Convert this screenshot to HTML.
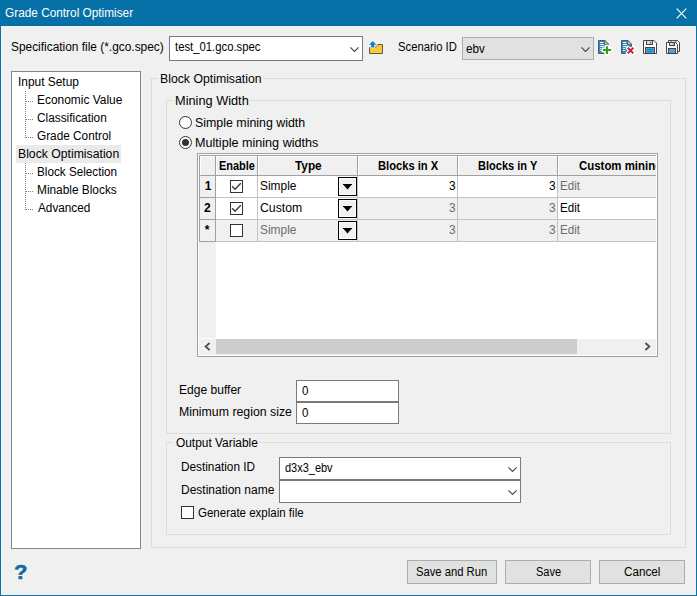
<!DOCTYPE html>
<html><head><meta charset="utf-8"><title>Grade Control Optimiser</title>
<style>
*{box-sizing:border-box;margin:0;padding:0}
html,body{width:697px;height:596px;overflow:hidden;background:#f0f0f0}
body{font-family:"Liberation Sans",sans-serif;font-size:12px;color:#000;position:relative}
.abs{position:absolute}
.t{position:absolute;white-space:nowrap;line-height:14px;height:14px;transform-origin:0 0}
#win{position:absolute;left:0;top:0;width:697px;height:596px;border:1px solid #0b71a6;border-top:none;background:#f0f0f0}
#title{position:absolute;left:0;top:0;width:697px;height:26px;background:#0571a6}
.white{background:#fff;border:1px solid #7a7a7a}
.grp{position:absolute;border:1px solid #dcdcdc}
.mask{position:absolute;background:#f0f0f0;height:3px}
.btn{position:absolute;height:24px;border:1px solid #adadad;background:#e1e1e1}
.ln{position:absolute;background:#a0a0a0}
.bg{position:absolute}
.cb{position:absolute;width:13px;height:13px;border:1px solid #333;background:#fff}
.dd{position:absolute;width:19px;height:19px;border:1px solid #000;background:#f0f0f0;box-shadow:inset 0 0 0 1px #fff}
.dd svg{position:absolute;left:4px;top:6px}
.vd{position:absolute;width:1px;background:repeating-linear-gradient(to bottom,#808080 0,#808080 1px,transparent 1px,transparent 2px)}
.hd{position:absolute;height:1px;background:repeating-linear-gradient(to right,#808080 0,#808080 1px,transparent 1px,transparent 2px)}
</style></head><body>
<div id="win"></div>
<div id="title"></div>
<svg class="abs" style="left:674.7px;top:6.7px" width="13" height="13" viewBox="0 0 13 13"><path d="M1.7 1.7L11.3 11.3M11.3 1.7L1.7 11.3" stroke="#fff" stroke-width="1.2" fill="none"/></svg>
<div class="abs white" style="left:169px;top:36px;width:194px;height:25px"></div>
<svg class="abs" style="left:348.5px;top:45.6px" width="11" height="7" viewBox="0 0 11 7"><path d="M1.4 1.4L5.5 5.5L9.6 1.4" stroke="#444" stroke-width="1.1" fill="none"/></svg>
<div class="abs" style="left:462px;top:37px;width:132px;height:23px;background:#e1e1e1;border:1px solid #adadad"></div>
<svg class="abs" style="left:579.8px;top:45.8px" width="11" height="7" viewBox="0 0 11 7"><path d="M1.4 1.4L5.5 5.5L9.6 1.4" stroke="#444" stroke-width="1.1" fill="none"/></svg>
<!-- icons -->
<svg class="abs" style="left:366px;top:38px" width="20" height="20" viewBox="366 38 20 20">
 <path d="M369.5 47.5H375.3L377.3 44.5H382.5V53.5H369.5Z" fill="#fcc934" stroke="#5a5a5a" stroke-width="1"/>
 <path d="M372.75 40.9L376.6 44.8H374.4V47.4H371.1V44.8H368.9Z" fill="#fff" stroke="#fff" stroke-width="1.6" stroke-linejoin="round"/>
 <path d="M372.75 40.9L376.6 44.8H374.4V47.4H371.1V44.8H368.9Z" fill="#1b7fb6"/>
</svg>
<svg class="abs" style="left:596px;top:38px" width="18" height="18" viewBox="596 38 18 18">
 <path d="M598.5 40.5H604.8L608.5 44.2V53.5H598.5Z" fill="#2e8dc1" stroke="#555" stroke-width="1"/>
 <path d="M604.8 40.5V44.2H608.5Z" fill="#fff" stroke="#555" stroke-width="0.9"/>
 <path d="M600.2 42.5H603.2M600.2 44.5H603.8M600.2 46.5H603.8M600.2 48.5H601.2M600.2 50.5H601.2" stroke="#fff" stroke-width="1"/>
 <path d="M605.9 46.2H608.1V48.9H611.1V51.1H608.1V54H605.9V51.1H602.9V48.9H605.9Z" fill="#fff" stroke="#fff" stroke-width="3" stroke-linejoin="round"/>
 <path d="M605.9 46.2H608.1V48.9H611.1V51.1H608.1V54H605.9V51.1H602.9V48.9H605.9Z" fill="#3a9a1e"/>
</svg>
<svg class="abs" style="left:619px;top:38px" width="18" height="18" viewBox="619 38 18 18">
 <path d="M621.5 40.5H627.8L631.5 44.2V53.5H621.5Z" fill="#2e8dc1" stroke="#555" stroke-width="1"/>
 <path d="M627.8 40.5V44.2H631.5Z" fill="#fff" stroke="#555" stroke-width="0.9"/>
 <path d="M623.2 42.5H626.2M623.2 44.5H626.8M623.2 46.5H626.2M623.2 48.5H625.2M623.2 50.5H625.2" stroke="#fff" stroke-width="1"/>
 <path d="M627.9 48L633.2 53.2M633.2 48L627.9 53.2" stroke="#fff" stroke-width="4.2" stroke-linecap="round" fill="none"/>
 <path d="M627.7 47.8L633.4 53.4M633.4 47.8L627.7 53.4" stroke="#c0212b" stroke-width="1.9" fill="none"/>
</svg>
<svg class="abs" style="left:641px;top:38px" width="18" height="18" viewBox="641 38 18 18">
 <path d="M643.5 40.5H654L656.5 43V53.5H643.5Z" fill="#fff" stroke="#444" stroke-width="1"/>
 <rect x="646.5" y="40.5" width="6" height="4" fill="#ddd" stroke="#444" stroke-width="1"/>
 <rect x="649.8" y="41.8" width="1.4" height="1.6" fill="#1b7fb6"/>
 <rect x="645.5" y="47.5" width="9" height="6" fill="#49a3d6" stroke="#444" stroke-width="1"/>
 <path d="M647 49.5H653M647 51.5H653" stroke="#1b7fb6" stroke-width="1"/>
</svg>
<svg class="abs" style="left:664px;top:38px" width="18" height="18" viewBox="664 38 18 18">
 <path d="M668.5 40.5H677.5L679.5 42.5V51.5H668.5Z" fill="#fff" stroke="#444" stroke-width="1"/>
 <rect x="671" y="40.5" width="5" height="3" fill="#cfe3f0" stroke="#444" stroke-width="0.8"/>
 <path d="M666.5 42.5H675.5L677.5 44.5V53.5H666.5Z" fill="#fff" stroke="#444" stroke-width="1"/>
 <rect x="669.5" y="42.5" width="5" height="3" fill="#ddd" stroke="#444" stroke-width="1"/>
 <rect x="672" y="43" width="2" height="2" fill="#9cc8e4"/>
 <rect x="668.5" y="48.5" width="7" height="5" fill="#49a3d6" stroke="#444" stroke-width="1"/>
</svg>


<div class="abs white" style="left:11px;top:71px;width:130px;height:478px;border-color:#828790"></div>
<div class="abs" style="left:16px;top:145px;width:105px;height:18px;background:#eaeaea"></div>
<div class="vd" style="left:25px;top:91px;height:47px"></div>
<div class="hd" style="left:26px;top:101px;width:8px"></div>
<div class="hd" style="left:26px;top:119px;width:8px"></div>
<div class="hd" style="left:26px;top:137px;width:8px"></div>
<div class="vd" style="left:25px;top:163px;height:47px"></div>
<div class="hd" style="left:26px;top:173px;width:8px"></div>
<div class="hd" style="left:26px;top:191px;width:8px"></div>
<div class="hd" style="left:26px;top:209px;width:8px"></div>
<div class="grp" style="left:151px;top:78px;width:535px;height:470px"></div><div class="mask" style="left:158px;top:77px;width:105px"></div>
<div class="grp" style="left:166px;top:100px;width:505px;height:334px"></div><div class="mask" style="left:173px;top:99px;width:77px"></div>
<div class="grp" style="left:166px;top:442px;width:505px;height:93px"></div><div class="mask" style="left:173px;top:441px;width:86px"></div>
<div class="abs" style="left:179px;top:116px;width:13px;height:13px;border:1px solid #333;border-radius:50%;background:#fff"></div>
<div class="abs" style="left:179px;top:136px;width:13px;height:13px;border:1px solid #333;border-radius:50%;background:#fff"></div>
<div class="abs" style="left:182px;top:139px;width:7px;height:7px;border-radius:50%;background:#333"></div>
<div class="abs" style="left:197px;top:153px;width:461px;height:204px;background:#fff;border:1px solid #a0a0a0"></div>
<div class="abs" id="gridclip" style="left:199px;top:155px;width:457px;height:200px;overflow:hidden"><div class="abs" style="left:-199px;top:-155px;width:697px;height:596px">
<div class="bg" style="left:199px;top:155px;width:17px;height:183px;background:#f0f0f0"></div>
<div class="bg" style="left:199px;top:155px;width:468px;height:21px;background:#f0f0f0"></div>
<div class="bg" style="left:558px;top:176px;width:110px;height:21px;background:#f0f0f0"></div>
<div class="bg" style="left:358px;top:198px;width:199px;height:21px;background:#f0f0f0"></div>
<div class="bg" style="left:216px;top:220px;width:452px;height:21px;background:#f0f0f0"></div>
<div class="bg" style="left:200px;top:156px;width:15px;height:1px;background:#fff"></div>
<div class="bg" style="left:200px;top:156px;width:1px;height:19px;background:#fff"></div>
<div class="bg" style="left:216px;top:156px;width:41px;height:1px;background:#fff"></div>
<div class="bg" style="left:216px;top:156px;width:1px;height:19px;background:#fff"></div>
<div class="bg" style="left:258px;top:156px;width:99px;height:1px;background:#fff"></div>
<div class="bg" style="left:258px;top:156px;width:1px;height:19px;background:#fff"></div>
<div class="bg" style="left:358px;top:156px;width:99px;height:1px;background:#fff"></div>
<div class="bg" style="left:358px;top:156px;width:1px;height:19px;background:#fff"></div>
<div class="bg" style="left:458px;top:156px;width:99px;height:1px;background:#fff"></div>
<div class="bg" style="left:458px;top:156px;width:1px;height:19px;background:#fff"></div>
<div class="bg" style="left:558px;top:156px;width:109px;height:1px;background:#fff"></div>
<div class="bg" style="left:558px;top:156px;width:1px;height:19px;background:#fff"></div>
<div class="ln" style="left:216px;top:197px;width:453px;height:1px;background:#c3c3c3"></div>
<div class="ln" style="left:216px;top:219px;width:453px;height:1px;background:#c3c3c3"></div>
<div class="ln" style="left:216px;top:241px;width:453px;height:1px;background:#c3c3c3"></div>
<div class="ln" style="left:257px;top:176px;width:1px;height:66px;background:#c3c3c3"></div>
<div class="ln" style="left:357px;top:176px;width:1px;height:66px;background:#c3c3c3"></div>
<div class="ln" style="left:457px;top:176px;width:1px;height:66px;background:#c3c3c3"></div>
<div class="ln" style="left:557px;top:176px;width:1px;height:66px;background:#c3c3c3"></div>
<div class="ln" style="left:667px;top:176px;width:1px;height:66px;background:#c3c3c3"></div>
<div class="ln" style="left:199px;top:155px;width:470px;height:1px"></div>
<div class="ln" style="left:199px;top:175px;width:470px;height:1px"></div>
<div class="ln" style="left:199px;top:197px;width:17px;height:1px"></div>
<div class="ln" style="left:199px;top:219px;width:17px;height:1px"></div>
<div class="ln" style="left:199px;top:241px;width:17px;height:1px"></div>
<div class="ln" style="left:199px;top:155px;width:1px;height:87px"></div>
<div class="ln" style="left:215px;top:155px;width:1px;height:87px"></div>
<div class="ln" style="left:257px;top:155px;width:1px;height:21px"></div>
<div class="ln" style="left:357px;top:155px;width:1px;height:21px"></div>
<div class="ln" style="left:457px;top:155px;width:1px;height:21px"></div>
<div class="ln" style="left:557px;top:155px;width:1px;height:21px"></div>
<div class="ln" style="left:667px;top:155px;width:1px;height:21px"></div>
<div class="cb" style="left:230px;top:180px"><svg width="11" height="11" viewBox="0 0 11 11" style="position:absolute;left:0;top:0"><path d="M1.1 5.3L4 8.2L9.8 2.3" stroke="#3a3a3a" stroke-width="1.4" fill="none"/></svg></div>
<div class="cb" style="left:230px;top:202px"><svg width="11" height="11" viewBox="0 0 11 11" style="position:absolute;left:0;top:0"><path d="M1.1 5.3L4 8.2L9.8 2.3" stroke="#3a3a3a" stroke-width="1.4" fill="none"/></svg></div>
<div class="cb" style="left:230px;top:224px"></div>
<div class="dd" style="left:338px;top:177px"><svg width="9" height="6" viewBox="0 0 9 6"><path d="M-0.3 0H9.3L4.5 5.4Z" fill="#000"/></svg></div>
<div class="dd" style="left:338px;top:199px"><svg width="9" height="6" viewBox="0 0 9 6"><path d="M-0.3 0H9.3L4.5 5.4Z" fill="#000"/></svg></div>
<div class="dd" style="left:338px;top:221px"><svg width="9" height="6" viewBox="0 0 9 6"><path d="M-0.3 0H9.3L4.5 5.4Z" fill="#000"/></svg></div>
<div class="t" style="left:579.25px;top:159px;font-weight:bold;transform:scaleX(0.952)">Custom mining</div>
<div class="bg" style="left:199px;top:339px;width:457px;height:16px;background:#f0f0f0"></div>
<div class="bg" style="left:216px;top:339px;width:361px;height:15px;background:#cdcdcd"></div>
<svg class="abs" style="left:203px;top:342px" width="9" height="9" viewBox="0 0 9 9"><path d="M6.6 1L2.6 4.5L6.6 8" stroke="#505050" stroke-width="1.8" fill="none"/></svg>
<svg class="abs" style="left:643px;top:342px" width="9" height="9" viewBox="0 0 9 9"><path d="M2.4 1L6.4 4.5L2.4 8" stroke="#505050" stroke-width="1.8" fill="none"/></svg>
</div></div>
<div class="abs white" style="left:296px;top:380px;width:103px;height:22px"></div>
<div class="abs white" style="left:296px;top:402px;width:103px;height:22px"></div>
<div class="abs white" style="left:279px;top:457px;width:242px;height:23px"></div>
<div class="abs white" style="left:279px;top:480px;width:242px;height:23px"></div>
<svg class="abs" style="left:506.9px;top:465.5px" width="11" height="7" viewBox="0 0 11 7"><path d="M1.4 1.4L5.5 5.5L9.6 1.4" stroke="#444" stroke-width="1.1" fill="none"/></svg>
<svg class="abs" style="left:506.9px;top:488.5px" width="11" height="7" viewBox="0 0 11 7"><path d="M1.4 1.4L5.5 5.5L9.6 1.4" stroke="#444" stroke-width="1.1" fill="none"/></svg>
<div class="cb" style="left:181px;top:506px"></div>
<div class="btn" style="left:407px;top:560px;width:90px"></div>
<div class="btn" style="left:505px;top:560px;width:86px"></div>
<div class="btn" style="left:599px;top:560px;width:86px"></div>
<div class="t" style="left:13.6px;top:560px;font-size:19.5px;font-weight:bold;color:#0a6ca5;line-height:24px;height:24px;-webkit-text-stroke:0.5px #0a6ca5;transform:scaleX(1.13)">?</div>
<div class="t" style="left:4.51px;top:5.5px;transform:scaleX(0.9853);color:#fff">Grade Control Optimiser</div>
<div class="t" style="left:10.80px;top:40px;transform:scaleX(0.9915)">Specification file (*.gco.spec)</div>
<div class="t" style="left:175.00px;top:40px;transform:scaleX(0.9425)">test_01.gco.spec</div>
<div class="t" style="left:397.93px;top:40px;transform:scaleX(0.9377)">Scenario ID</div>
<div class="t" style="left:466.26px;top:41.5px;transform:scaleX(0.9737)">ebv</div>
<div class="t" style="left:17.71px;top:75px;transform:scaleX(0.9917)">Input Setup</div>
<div class="t" style="left:36.95px;top:93px;transform:scaleX(0.9947)">Economic Value</div>
<div class="t" style="left:37.21px;top:111px;transform:scaleX(0.9871)">Classification</div>
<div class="t" style="left:37.21px;top:129px;transform:scaleX(0.9832)">Grade Control</div>
<div class="t" style="left:17.94px;top:147px;transform:scaleX(1.0184)">Block Optimisation</div>
<div class="t" style="left:36.97px;top:165px;transform:scaleX(0.9759)">Block Selection</div>
<div class="t" style="left:36.96px;top:183px;transform:scaleX(0.9881)">Minable Blocks</div>
<div class="t" style="left:37.70px;top:201px;transform:scaleX(0.9801)">Advanced</div>
<div class="t" style="left:159.53px;top:71.5px;transform:scaleX(1.0224)">Block Optimisation</div>
<div class="t" style="left:174.50px;top:93.5px;transform:scaleX(1.0632)">Mining Width</div>
<div class="t" style="left:175.50px;top:435.5px;transform:scaleX(0.9914)">Output Variable</div>
<div class="t" style="left:194.68px;top:115.5px;transform:scaleX(1.0326)">Simple mining width</div>
<div class="t" style="left:194.91px;top:135.5px;transform:scaleX(1.0512)">Multiple mining widths</div>
<div class="t" style="left:218.94px;top:158.5px;transform:scaleX(0.9143);font-weight:bold">Enable</div>
<div class="t" style="left:294.80px;top:158.5px;transform:scaleX(0.9832);font-weight:bold">Type</div>
<div class="t" style="left:378.24px;top:158.5px;transform:scaleX(0.9297);font-weight:bold">Blocks in X</div>
<div class="t" style="left:478.24px;top:158.5px;transform:scaleX(0.9192);font-weight:bold">Blocks in Y</div>
<div class="t" style="left:204.70px;top:179px;transform:scaleX(1.0000);font-weight:bold">1</div>
<div class="t" style="left:204.05px;top:201px;transform:scaleX(1.0000);font-weight:bold">2</div>
<div class="t" style="left:204.80px;top:223px;transform:scaleX(1.0000);font-weight:bold">*</div>
<div class="t" style="left:260.00px;top:178.5px;transform:scaleX(0.9930)">Simple</div>
<div class="t" style="left:259.99px;top:200.5px;transform:scaleX(1.0211)">Custom</div>
<div class="t" style="left:260.00px;top:222.5px;transform:scaleX(0.9930);color:#6d6d6d">Simple</div>
<div class="t" style="left:448.70px;top:178.5px;transform:scaleX(0.9913)">3</div>
<div class="t" style="left:448.70px;top:200.5px;transform:scaleX(0.9913);color:#6d6d6d">3</div>
<div class="t" style="left:448.70px;top:222.5px;transform:scaleX(0.9913);color:#6d6d6d">3</div>
<div class="t" style="left:548.70px;top:178.5px;transform:scaleX(0.9913)">3</div>
<div class="t" style="left:548.70px;top:200.5px;transform:scaleX(0.9913);color:#6d6d6d">3</div>
<div class="t" style="left:548.70px;top:222.5px;transform:scaleX(0.9913);color:#6d6d6d">3</div>
<div class="t" style="left:559.88px;top:178.5px;transform:scaleX(0.9650);color:#6d6d6d">Edit</div>
<div class="t" style="left:559.88px;top:200.5px;transform:scaleX(0.9650)">Edit</div>
<div class="t" style="left:559.88px;top:222.5px;transform:scaleX(0.9650);color:#6d6d6d">Edit</div>
<div class="t" style="left:178.55px;top:382.5px;transform:scaleX(1.0049)">Edge buffer</div>
<div class="t" style="left:302.06px;top:383.5px;transform:scaleX(0.9600)">0</div>
<div class="t" style="left:178.53px;top:404.5px;transform:scaleX(1.0266)">Minimum region size</div>
<div class="t" style="left:302.06px;top:405.5px;transform:scaleX(0.9600)">0</div>
<div class="t" style="left:180.66px;top:459.5px;transform:scaleX(0.9818)">Destination ID</div>
<div class="t" style="left:285.37px;top:460.5px;transform:scaleX(0.9140)">d3x3_ebv</div>
<div class="t" style="left:180.65px;top:483px;transform:scaleX(0.9995)">Destination name</div>
<div class="t" style="left:197.52px;top:505.5px;transform:scaleX(0.9593)">Generate explain file</div>
<div class="t" style="left:415.53px;top:564.5px;transform:scaleX(0.9360)">Save and Run</div>
<div class="t" style="left:535.84px;top:564.5px;transform:scaleX(0.9170)">Save</div>
<div class="t" style="left:624.01px;top:564.5px;transform:scaleX(0.9738)">Cancel</div>
</body></html>
